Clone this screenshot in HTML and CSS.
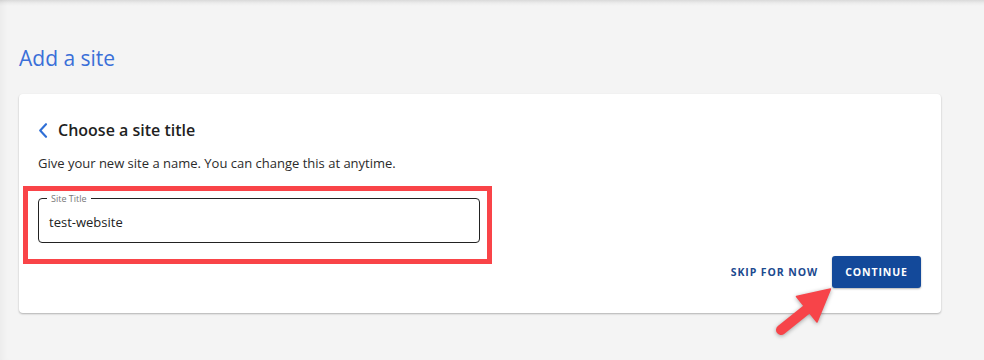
FILE: index.html
```html
<!DOCTYPE html>
<html lang="en">
<head>
<meta charset="utf-8">
<title>Add a site</title>
<link rel="stylesheet" href="styles.css">
</head>
<body>
<main class="page">
  <h1 class="page-title">Add a site</h1>
  <section class="card">
    <div class="card-head">
      <svg class="back" width="10" height="15" viewBox="0 0 10 15" aria-hidden="true">
        <path d="M8 1.2 L2.2 7.5 L8 13.8" fill="none" stroke="#2f6fd6" stroke-width="2.1" stroke-linecap="round" stroke-linejoin="round"/>
      </svg>
      <h2 class="card-title">Choose a site title</h2>
    </div>
    <p class="desc">Give your new site a name. You can change this at anytime.</p>
    <div class="field">
      <fieldset class="outline">
        <legend>Site Title</legend>
      </fieldset>
      <div class="value">test-website</div>
      <div class="highlight"></div>
    </div>
    <div class="actions">
      <button class="btn-text">SKIP FOR NOW</button>
      <button class="btn-primary">CONTINUE</button>
    </div>
  </section>
  <svg class="pointer" width="70" height="60" viewBox="770 282 70 60" aria-hidden="true">
    <line x1="781" y1="330" x2="806" y2="310" stroke="#f74449" stroke-width="10" stroke-linecap="round"/>
    <polygon points="830.5,289 796.5,296.5 817,322" fill="#f74449" stroke="#f74449" stroke-width="1.5" stroke-linejoin="round"/>
  </svg>
</main>
</body>
</html>
```
FILE: styles.css
```css
* { box-sizing: border-box; }
html, body { margin: 0; padding: 0; }
body {
  width: 984px;
  height: 360px;
  overflow: hidden;
  background: #f4f4f4;
  font-family: "Open Sans", "Noto Sans", "Liberation Sans", sans-serif;
}
.page {
  position: relative;
  height: 360px;
  padding: 44px 43px 0 19px;
  background:
    linear-gradient(to bottom, #d9d9d9 0, #ececec 3px, #f4f4f4 6px, #f4f4f4 100%);
  box-shadow: inset 7px 0 6px -4px rgba(0,0,0,0.04);
}
.page-title {
  margin: 0;
  font-size: 21px;
  font-weight: 400;
  line-height: 29px;
  color: #3a6fd8;
}
.card {
  margin-top: 21px;
  width: 922px;
  height: 219px;
  background: #fff;
  border-radius: 4px;
  box-shadow: 0 1px 2px rgba(0,0,0,0.28);
  padding: 24px 20px 0 19px;
  display: flex;
  flex-direction: column;
}
.card-head {
  display: flex;
  align-items: center;
  gap: 10px;
  height: 24px;
}
.back { display: block; margin-top: 1px; }
.card-title {
  margin: 0;
  font-size: 16px;
  font-weight: 600;
  line-height: 24px;
  color: #1f1f1f;
}
.desc {
  margin: 12px 0 0;
  font-size: 13px;
  line-height: 18px;
  color: #2b2b2b;
}
.field {
  position: relative;
  margin-top: 27px;
  width: 442px;
  height: 44px;
}
.outline {
  position: absolute;
  inset: -6px 0 0 0;
  margin: 0;
  padding: 0 8px;
  border: 1.5px solid #222;
  border-radius: 4px;
  pointer-events: none;
}
.outline legend {
  padding: 0 4px;
  font-size: 9px;
  line-height: 11px;
  color: #777;
}
.value {
  padding: 14px 0 0 11px;
  font-size: 13px;
  line-height: 18px;
  color: #222;
}
.highlight {
  position: absolute;
  left: -15px;
  top: -13px;
  width: 469px;
  height: 78px;
  border: 5px solid #f94448;
  pointer-events: none;
}
.actions {
  margin-top: 13px;
  display: flex;
  justify-content: flex-end;
  align-items: center;
  gap: 5px;
}
.btn-text, .btn-primary {
  font-family: inherit;
  font-size: 10.5px;
  font-weight: 700;
  letter-spacing: 0.9px;
  border: 0;
  height: 32px;
  padding: 0 9px;
  cursor: pointer;
}
.btn-text {
  background: transparent;
  color: #1c4a8f;
}
.btn-primary {
  width: 89px;
  padding: 0;
  background: #13499a;
  color: #fff;
  border-radius: 3px;
  box-shadow: 0 1px 2px rgba(0,0,0,0.3);
}
.pointer {
  position: absolute;
  left: 770px;
  top: 282px;
  filter: drop-shadow(0 1px 2px rgba(0,0,0,0.35));
}
```
